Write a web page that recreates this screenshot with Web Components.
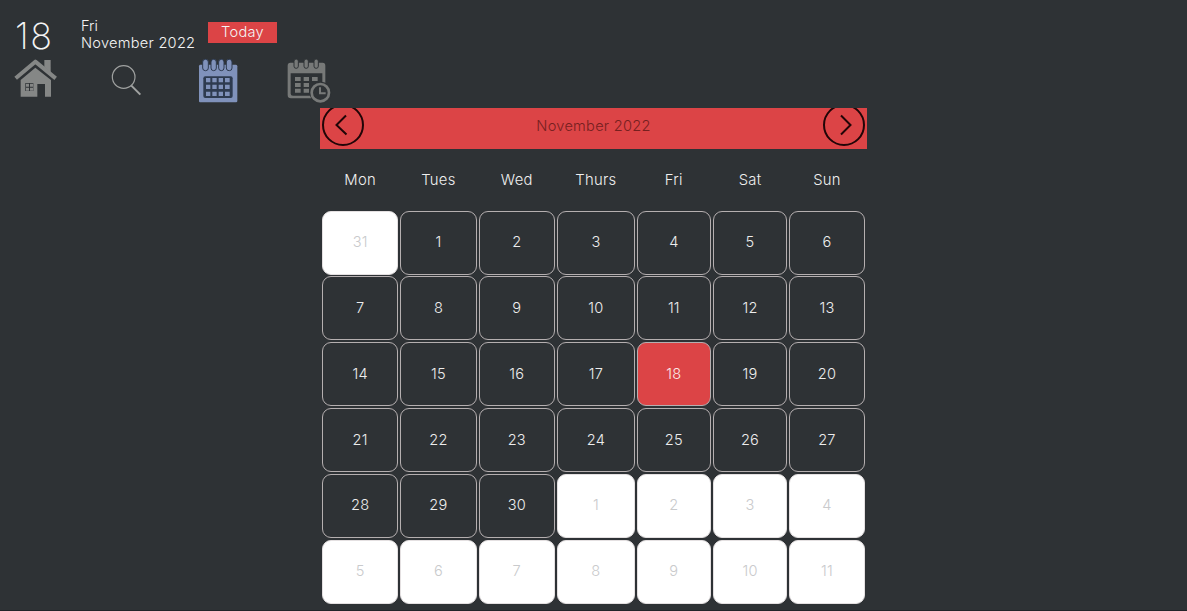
<!DOCTYPE html>
<html lang="en">
<head>
<meta charset="utf-8">
<title>Calendar</title>
<style>
html,body{margin:0;height:100%;overflow:hidden;background:#2e3235}
</style>
</head>
<body>
<calendar-app></calendar-app>
<script>
const define = (name, html, setup) => customElements.define(name, class extends HTMLElement {
  constructor() {
    super();
    const t = document.createElement('template');
    t.innerHTML = html;
    this.attachShadow({mode: 'open'}).append(t.content.cloneNode(true));
  }
  connectedCallback() { if (setup) setup(this); }
});

define('date-summary', `<style>
:host{display:flex;height:56px;color:#f4f4f4;white-space:nowrap}
.day{padding:15px 0 0 15px;font-size:36px;line-height:42px;font-weight:250;letter-spacing:1.5px;box-sizing:border-box;flex:none;width:81px}
.text{width:127px;padding-top:18px;font-size:14.6px;line-height:17px;font-weight:300}
.my{letter-spacing:.26px}
.today{width:69px;height:21px;margin-top:22px;background:#dc4446;text-align:center;font-size:14.6px;line-height:21px;font-weight:300;letter-spacing:.3px}
</style>
<div class="day">18</div><div class="text"><div>Fri</div><div class="my">November 2022</div></div><div class="today">Today</div>`);

define('nav-icon', `<style>:host{display:block;height:50px}</style><slot></slot>`);

define('icon-bar', `<style>
:host{display:flex;height:51.5px;align-items:flex-start}
nav-icon{width:90px}
svg{display:block;width:60px;height:52px}
nav-icon.home{width:100px}nav-icon.search{width:87px}nav-icon.month{width:91px}
</style>
<nav-icon class="home"><svg viewBox="0 18 180 156" fill="#858786"><path d="M133 30h19v38l-19-17z"/><path d="M47 85 106 35 167 85" fill="none" stroke="#858786" stroke-width="12" stroke-linejoin="round"/><path fill-rule="evenodd" d="M62 90 106 53l47 37v50h-18v-38h-23v38H62zM76 99v24h24V99z"/><path d="M78 101h9v9h-9zM90 101h9v9h-9zM78 113h9v9h-9zM90 113h9v9h-9z"/></svg></nav-icon>
<nav-icon class="search"><svg viewBox="300 18 180 156" fill="none" stroke="#a0a2a1"><circle cx="371" cy="81" r="34" stroke-width="3.500"/><path d="m394 107 27 27" stroke-width="6"/></svg></nav-icon>
<nav-icon class="month"><svg viewBox="21 18 180 156" fill="#8092bb"><path d="M60 44h108q4 0 4 5v104q0 4-4 4H60q-3 0-3-4V49q0-5 3-5z"/><g stroke="#2e3b50" stroke-width="3"><rect x="68" y="28" width="17" height="34" rx="8"/><rect x="93" y="28" width="16" height="34" rx="8"/><rect x="116" y="28" width="16" height="34" rx="8"/><rect x="139" y="28" width="17" height="34" rx="8"/></g><rect x="70" y="79" width="88" height="65" rx="6" fill="#2e3b50"/><path d="M78 84h13v13H78zM97 84h13v13H97zM116 84h13v13h-13zM135 84h14v13h-14zM78 104h13v13H78zM97 104h13v13H97zM116 104h13v13h-13zM135 104h14v13h-14zM78 125h13v13H78zM97 125h13v13H97zM116 125h13v13h-13zM135 125h14v13h-14z"/></svg></nav-icon>
<nav-icon><svg viewBox="294 18 180 156" fill="#777978"><path fill-rule="evenodd" d="M331 38h97q8 0 8 9v93q0 5-6 5h-97q-10 0-10-10V47q0-9 8-9zM332 70v61q0 6 7 6h88V70z"/><g stroke="#2e3235" stroke-width="3"><rect x="342" y="27" width="13" height="28" rx="6.5"/><rect x="372" y="27" width="13" height="28" rx="6.5"/><rect x="402" y="27" width="13" height="28" rx="6.5"/></g><path d="M345 81h17v12h-17zM371 81h16v12h-16zM396 81h17v12h-17zM345 99h17v12h-17zM371 99h16v12h-16zM345 116h17v12h-17zM371 116h16v12h-16z"/><circle cx="422" cy="128" r="33" fill="#2e3235"/><circle cx="421" cy="128" r="26" fill="#2e3235" stroke="#777978" stroke-width="8"/><path d="M420 112v18h17" fill="none" stroke="#777978" stroke-width="6"/></svg></nav-icon>`);

define('month-header', `<style>
:host{display:flex;justify-content:space-between;align-items:flex-start;height:41.3px;background:#dc4446;color:#76201f;overflow:hidden}
svg{display:block;width:46px;height:41px;overflow:hidden}
.title{font-size:14.6px;line-height:36px;font-weight:300;letter-spacing:.26px}
</style>
<svg viewBox="0 0 46 41" fill="none" stroke="#210507" stroke-width="2"><circle cx="23" cy="17" r="20"/><path d="M26 7.500 16.5 17 26.500 26.500"/></svg>
<div class="title">November 2022</div>
<svg viewBox="0 0 46 41" fill="none" stroke="#210507" stroke-width="2"><circle cx="23" cy="17" r="20"/><path d="m20 7.500 9.500 9.500L20 26.500"/></svg>`);

define('day-cell', `<style>
:host{display:flex;align-items:center;justify-content:center;box-sizing:border-box;border:1px solid #b5afb0;border-radius:9px;color:#ededed;font-size:14.6px;line-height:18px;font-weight:300;letter-spacing:.2px;padding-bottom:.5px}
:host([other]){background:#fff;color:#c9cacc;border-color:#e4e0e1}
:host([today]){background:#dc4446;color:#fbe9e9}
</style><slot></slot>`);

define('month-grid', `<style>
:host{display:block;padding:0 2px}
.row{display:grid;grid-template-columns:76.300px 76.600px 76.400px 78.200px 74px 74.700px 75.500px;column-gap:1.850px}
.names{height:61.750px;color:#f0f0f0;font-size:14.8px;line-height:62px;font-weight:350;letter-spacing:.3px;text-align:center}
.days{grid-auto-rows:64px;row-gap:1.800px}
</style><div class="row names"></div><div class="row days"></div>`, el => {
  const names = el.shadowRoot.querySelector('.names'), days = el.shadowRoot.querySelector('.days');
  for (const n of ['Mon', 'Tues', 'Wed', 'Thurs', 'Fri', 'Sat', 'Sun']) {
    const d = document.createElement('div'); d.textContent = n; names.append(d);
  }
  for (let i = 0; i < 42; i++) {
    const c = document.createElement('day-cell');
    c.textContent = i === 0 ? 31 : i <= 30 ? i : i - 30;
    if (i === 0 || i > 30) c.setAttribute('other', '');
    if (i === 18) c.setAttribute('today', '');
    days.append(c);
  }
});

define('calendar-app', `<style>
:host{display:flex;flex-direction:column;box-sizing:border-box;height:611px;background:#2e3235;border-bottom:1px solid #212429;font-family:Inter,"Open Sans",sans-serif}
main{width:547px;margin:0 auto}
</style>
<date-summary></date-summary><icon-bar></icon-bar>
<main><month-header></month-header><month-grid></month-grid></main>`);
</script>
</body>
</html>
